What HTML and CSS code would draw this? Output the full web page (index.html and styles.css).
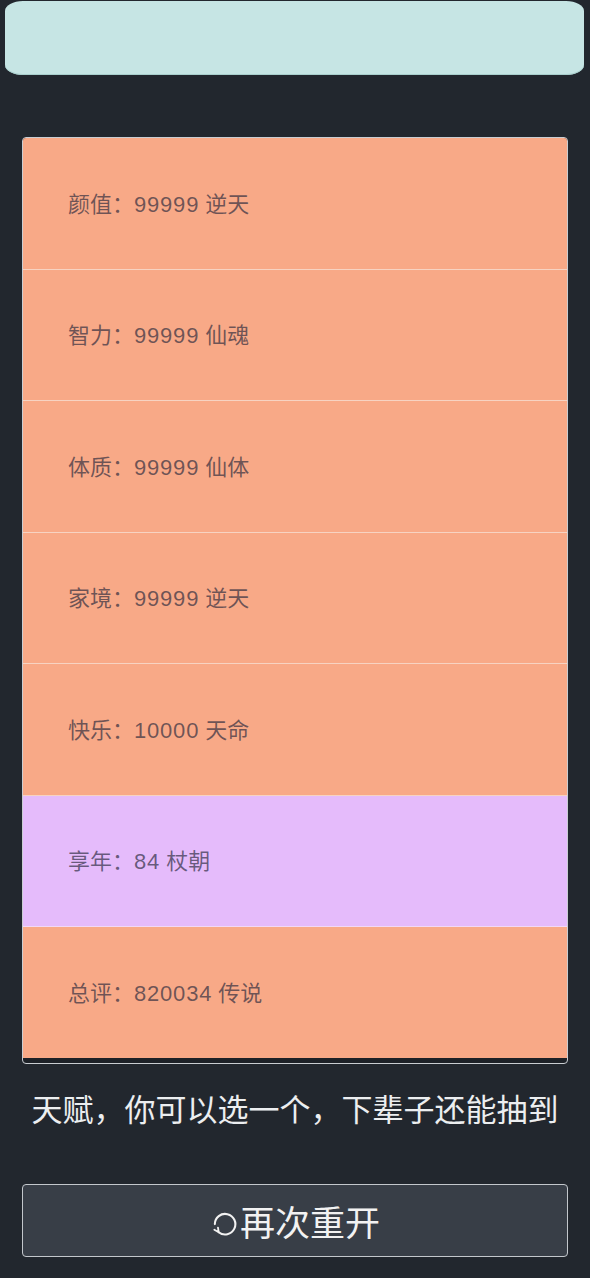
FILE: index.html
```html
<!DOCTYPE html>
<html lang="zh-CN">
<head>
<meta charset="utf-8">
<title>人生重开</title>
<link rel="stylesheet" href="styles.css">
</head>
<body>
<div class="topbar"></div>
<ul class="stats">
  <li class="stat"><span>颜值：<span class="num">99999</span> 逆天</span></li>
  <li class="stat"><span>智力：<span class="num">99999</span> 仙魂</span></li>
  <li class="stat"><span>体质：<span class="num">99999</span> 仙体</span></li>
  <li class="stat"><span>家境：<span class="num">99999</span> 逆天</span></li>
  <li class="stat"><span>快乐：<span class="num">10000</span> 天命</span></li>
  <li class="stat stat-purple"><span>享年：<span class="num">84</span> 杖朝</span></li>
  <li class="stat"><span>总评：<span class="num">820034</span> 传说</span></li>
</ul>
<p class="hint">天赋，你可以选一个，下辈子还能抽到</p>
<button class="restart"><svg class="icon" viewBox="0 0 24 24" width="29" height="29"><path d="M4 12.5 A8.5 8.5 0 1 1 7.2 19.2" fill="none" stroke="#f2f2f2" stroke-width="1.7" stroke-linecap="round"/><path d="M3.6 17.2 L7.2 19.2 L6.6 15.4" fill="none" stroke="#f2f2f2" stroke-width="1.5" stroke-linecap="round" stroke-linejoin="round"/></svg>再次重开</button>
</body>
</html>
```
FILE: styles.css
```css
html, body {
  margin: 0;
  padding: 0;
  background: #22272e;
  font-family: "Noto Sans CJK SC", "Noto Sans", sans-serif;
}

.topbar {
  height: 74px;
  margin: 1px 6px 0 5px;
  background: #c6e5e4;
  border-radius: 18px / 10px;
  box-shadow: inset 0 -1px 0 #a9cfcd;
}

.stats {
  list-style: none;
  margin: 62px 22px 0;
  padding: 0 0 5px;
  border: 1px solid #c9cdd2;
  border-radius: 4px;
  background: #1d2127;
  overflow: hidden;
}

.stat {
  height: 127.5px;
  display: flex;
  align-items: center;
  padding: 0 0 3px 45px;
  background: #f8a987;
  border-bottom: 1px solid #f7d3c2;
  font-family: "Liberation Sans", "Noto Sans CJK SC", sans-serif;
  font-size: 22px;
  color: rgba(40, 40, 60, 0.66);
  box-sizing: content-box;
}

.num {
  letter-spacing: 0.8px;
}

.stat:last-child {
  border-bottom: none;
}

.stat-purple {
  background: #e5bbfb;
  border-bottom-color: #f2d8f7;
}

.hint {
  margin: 21px 0 0;
  text-align: center;
  font-size: 31px;
  line-height: 45px;
  color: #eceef0;
}

.restart {
  display: flex;
  align-items: center;
  justify-content: center;
  width: calc(100% - 44px);
  height: 73px;
  margin: 54px 22px 0;
  padding: 0;
  background: #383e47;
  border: 1px solid #c3c7cc;
  border-radius: 4px;
  color: #f2f2f2;
  font-family: "Noto Sans CJK SC", "Noto Sans", sans-serif;
  font-size: 35px;
}

.icon {
  margin-right: 1px;
  margin-top: 6px;
}
```
